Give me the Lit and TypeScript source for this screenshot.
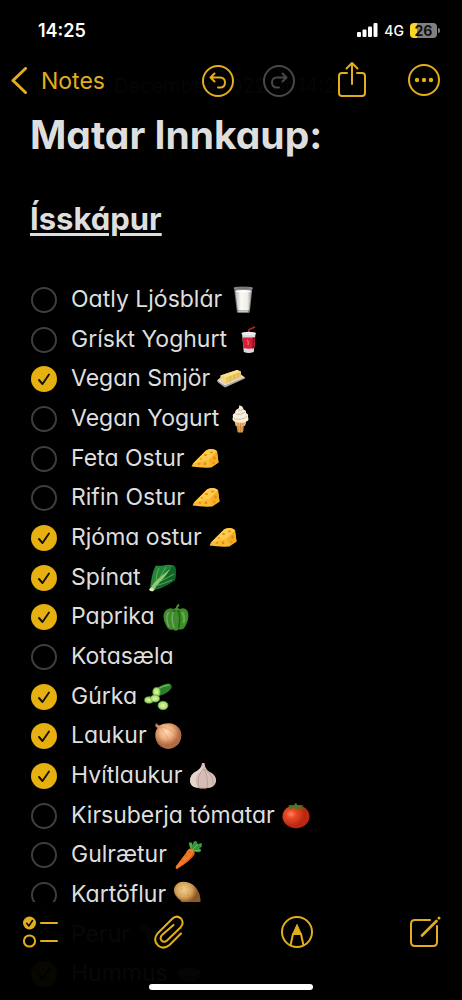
import { LitElement, html, css, svg, nothing, type TemplateResult } from "lit";
import { customElement, property, state } from "lit/decorators.js";

type Item = { text: string; food?: string; done: boolean };

const items: Item[] = [
  { text: "Oatly Ljósblár", food: "milk", done: false },
  { text: "Grískt Yoghurt", food: "cup", done: false },
  { text: "Vegan Smjör", food: "butter", done: true },
  { text: "Vegan Yogurt", food: "cone", done: false },
  { text: "Feta Ostur", food: "cheese", done: false },
  { text: "Rifin Ostur", food: "cheese", done: false },
  { text: "Rjóma ostur", food: "cheese", done: true },
  { text: "Spínat", food: "leaf", done: true },
  { text: "Paprika", food: "pepper", done: true },
  { text: "Kotasæla", done: false },
  { text: "Gúrka", food: "cucumber", done: true },
  { text: "Laukur", food: "onion", done: true },
  { text: "Hvítlaukur", food: "garlic", done: true },
  { text: "Kirsuberja tómatar", food: "tomato", done: false },
  { text: "Gulrætur", food: "carrot", done: false },
  { text: "Kartöflur", food: "potato", done: false },
  { text: "Perur", food: "pear", done: false },
  { text: "Hummus", food: "bowl", done: true },
];

/* Every food picture is drawn on a 28 x 28 grid. */
const foods: Record<string, TemplateResult> = {
  milk: svg`
    <defs><linearGradient id="g" x1="0" x2="1"><stop offset="0" stop-color="#b9b6b2"/><stop offset=".35" stop-color="#fbf9f4"/><stop offset=".75" stop-color="#f1eee8"/><stop offset="1" stop-color="#a5a19d"/></linearGradient></defs>
    <path d="M5 1.5h18.5l-2.6 24Q20.800 27 19 27H10Q8 27 7.800 25.500z" fill="#77787a"/>
    <path d="M6.300 5h16l-2.100 18.500Q20 24.500 18.500 24.500h-8Q9 24.500 8.700 23.500z" fill="url(#g)"/>
    <ellipse cx="14.300" cy="5.200" rx="8" ry="1.300" fill="#fffdf8"/>
    <ellipse cx="14.200" cy="2.200" rx="9.200" ry="1.200" fill="#6b6d70" stroke="#a6a8aa" stroke-width=".6"/>
    <path d="M9 25.500h10" stroke="#c5c5c5"/>`,
  cup: svg`
    <path d="M14.500 8L15 3.500L21 1" stroke="#c61f2c" stroke-width="1.400" fill="none"/>
    <path d="M8 7.500h13.500l-1.700 18.500Q14.700 28 9.800 26z" fill="#d8dadd"/>
    <path d="M8.500 11.500h12.600l-1 10.500Q14.600 23.500 9.500 22z" fill="#d51f33"/>
    <path d="M18.500 11.500h2.600l-1 10.500-2 .7z" fill="#a20f22"/>
    <ellipse cx="14.700" cy="7.500" rx="7.300" ry="1.700" fill="#eceef0"/>
    <path d="M13 14q2 1 1 5" stroke="#ef7080" fill="none" stroke-width="1.200"/>`,
  butter: svg`
    <path d="M0 15.500L4 12L24 9.500L28 12.500L8 22z" fill="#dedbd4"/>
    <path d="M0 15.500L8 20.500L28 12V13.500L8 22.500L1 17.500z" fill="#a8a49b"/>
    <path d="M3.500 10.500L20 5L24 6.500V12L9 18.800L4 16z" fill="#e9c65f"/>
    <path d="M3.500 10.500L20 5L24 6.500L9 12.500z" fill="#fbe08d"/>
    <path d="M3.500 10.500L9 12.500V18.800L4 16z" fill="#f3d67d"/>
    <path d="M13.500 10.800v5.500M17.500 9.200v5.500M21 7.800v5.500" stroke="#d4ab48" stroke-width=".6"/>`,
  cone: svg`
    <path d="M8.500 16h11.500l-1.200 5h-1l-1 6.500h-5L10.500 21h-.8z" fill="#dc9d4c"/>
    <path d="M9 17h11l-1 4H10z" fill="#efb869"/>
    <path d="M12 17v10M14.500 17v10M17 17v9" stroke="#b87530" stroke-width=".6"/>
    <path d="M13 .5q4 .2 4.500 4 3 .5 2.500 3.500 2.800 1 2 4 1.500 3-1.500 4.500-6 2.500-12 0Q5.500 15 7 12q-1-3 2-4 0-3.500 3.500-4.500 1-1 .5-3z" fill="#f6eede"/>
    <path d="M10 9q5 2 9-2M8 13.500q7 2.500 13-2M12 5q3 1 5-.5" stroke="#c9b995" stroke-width=".9" fill="none"/>`,
  cheese: svg`
    <path d="M.5 21.500L2 18.500L15 5.500Q17 4 20 4Q24.500 4 26 6.500L27.500 17.500L20 22.500Q10 23 .5 21.500z" fill="#f9bb33"/>
    <path d="M2 18.500L15 5.500Q17 4 20 4Q24.500 4 26 6.500L18 14.500Q10 16 2 18.500z" fill="#ffcb4b"/>
    <path d="M18 14.500L26 6.500L27.500 17.500L20 22.500z" fill="#f5ad28"/>
    <g fill="#dd8d18"><ellipse cx="8" cy="18.800" rx="1.500" ry=".9"/><ellipse cx="14" cy="18.800" rx="1.400" ry="1.500"/><ellipse cx="23.500" cy="13" rx="1.200" ry="1.700"/><ellipse cx="14.500" cy="10" rx="1.600" ry="1"/><ellipse cx="20.500" cy="7.500" rx="1.500" ry=".9"/><circle cx="22.500" cy="18" r="1"/><ellipse cx="10" cy="14" rx="1.100" ry=".8"/></g>`,
  leaf: svg`
    <path d="M2 24Q3 17 4 12Q6 4 8 1.500Q12 2 15 1.500Q21 0 27 2Q28.500 8 27 16Q22 19 20 20.500Q14 24 8 25.500L4 27.500z" fill="#23853a"/>
    <path d="M16 9Q22 3 27 2Q28.500 8 27 16Q22 19 20 20.500Q14 23 6 25z" fill="#12652a"/>
    <path d="M2 26Q4 20 10 15Q17 9 23 4Q18 12 12 18Q8 22 5 27.500z" fill="#8fca74"/>
    <path d="M8 18Q8 9 11 4M11 15Q15 8 18 3M11 18Q19 14 26 10M7 22Q15 20 24 16" stroke="#63b355" stroke-width=".9" fill="none"/>
    <ellipse cx="3.500" cy="25.500" rx="2.200" ry="1.800" fill="#e4eac4"/>`,
  pepper: svg`
    <path d="M3 8Q7 4 11 6Q15 4 18 6Q23 4 25.500 8Q28 14 24 22Q21 28 17 26Q14 29 11 26.500Q6 28 4 22Q-.5 14 3 8z" fill="#3f8c2b"/>
    <path d="M6.500 9Q3 15 7 24M11 9Q9 17 12 25" stroke="#76a766" stroke-width="1.500" fill="none"/>
    <path d="M16.500 8Q19 16 16.500 25" stroke="#22601c" stroke-width="1.500" fill="none"/>
    <path d="M20 9Q23.500 14 21.500 20" stroke="#5fb040" stroke-width="2.200" fill="none"/>
    <path d="M9 8Q14 5.500 19 8Q15 9.500 14 8Q13 9.500 9 8z" fill="#216a20"/>
    <path d="M14.500 8Q14 4 17 1.500" stroke="#4f8a35" stroke-width="1.800" fill="none"/>`,
  cucumber: svg`
    <path d="M10 8Q15 2 24 .5Q28.500 .8 27.500 5Q24 10.500 15 13z" fill="#2d7d2c"/>
    <path d="M13 6.500Q19 2.500 25.500 2" stroke="#6fb04f" stroke-width="1.300" fill="none"/>
    <g fill="#b4e274" stroke="#4f9e3a" stroke-width=".8"><ellipse cx="12.500" cy="9" rx="3.700" ry="4.500"/><ellipse cx="5" cy="17" rx="4.400" ry="3.200"/><ellipse cx="11" cy="15.500" rx="4.500" ry="3.500"/><ellipse cx="19" cy="22.500" rx="5" ry="4.200"/></g>
    <g fill="#d6ef9b"><ellipse cx="12.300" cy="9" rx="1.800" ry="2.300"/><ellipse cx="5" cy="17" rx="2" ry="1.300"/><ellipse cx="11" cy="15.500" rx="2.300" ry="1.600"/><ellipse cx="19" cy="22.500" rx="2.600" ry="1.900"/></g>`,
  onion: svg`
    <defs><radialGradient id="g" cx=".42" cy=".35"><stop offset="0" stop-color="#ffdcb4"/><stop offset=".55" stop-color="#ecab7c"/><stop offset="1" stop-color="#b06a44"/></radialGradient></defs>
    <path d="M2 1L5 3.500Q11 .5 18 1.500Q27 4.500 27.500 13Q27 22 20 25.500Q15 28 10 26Q4 24 2 18Q0 11 3.500 6L1 4z" fill="url(#g)"/>
    <path d="M5 5Q2 16 12 26M5 5Q14 12 17 26M5 5Q20 5 25 19" stroke="#c98258" stroke-width=".4" fill="none"/>`,
  garlic: svg`
    <path d="M13 1L15.500 1Q16 7 20 9.500Q28 13 27 20Q25 26 18 26Q14 28 10 26Q2 26 1 19Q1 12 8 9Q12.500 6 13 1z" fill="#d6beb8"/>
    <path d="M14 4Q14 9 9 12Q4 18 9 25.500Q2 26 1 19Q1 12 8 9z" fill="#e6d5cd"/>
    <path d="M14 7Q7 15 10 26M14.500 7Q20 15 18 26M15 7Q25 13 24 23" stroke="#b3948f" stroke-width=".7" fill="none"/>
    <path d="M10.500 26.500h7" stroke="#7b6253" stroke-width="1.200"/>`,
  tomato: svg`
    <defs><radialGradient id="g" cx=".32" cy=".4"><stop offset="0" stop-color="#ff8660"/><stop offset=".35" stop-color="#ea4a28"/><stop offset="1" stop-color="#ba2812"/></radialGradient></defs>
    <ellipse cx="14" cy="14.500" rx="13.500" ry="11.800" fill="url(#g)"/>
    <path d="M13 4.500Q9 2.500 6 3.500Q8 5 9 5.200Q7 6 6.500 7.500Q10 7 12.500 5.800L14 8.500L15.500 5.800Q18 7 22 7Q20 5.500 18 5L22 3Q17 3 15 4L14.500 1L12.500 1.500z" fill="#467b26"/>`,
  carrot: svg`
    <path d="M17 8Q13 2 16 1Q18 1 19 4Q19-.5 22 0Q24 1 23 4Q28 0 28 4Q28 7 25 7Q29 9 26 11Q23 12 20 10z" fill="#37933a"/>
    <path d="M18 9L24 3M17 7L17 2M20 10L26 9" stroke="#75bb50" fill="none"/>
    <path d="M12 12Q14 7 17.500 7.500Q21 9 20.500 13Q18 18 3 28Q1 28 2 25z" fill="#f27a25"/>
    <path d="M19 10Q20 15 4 27L3 28Q18 19 20.500 13z" fill="#d85d1c"/>
    <path d="M11 14l3 1.500M7 19l3 1.500M14 11l3 1" stroke="#c9540f" stroke-width=".7"/>`,
  potato: svg`
    <defs><radialGradient id="g" cx=".38" cy=".32"><stop offset="0" stop-color="#f2cf8c"/><stop offset=".6" stop-color="#d3a059"/><stop offset="1" stop-color="#8a5926"/></radialGradient></defs>
    <path d="M1.500 6Q5-.5 13 1Q20 2 24 8Q28 14 27.500 20Q25 27 18 26Q11 25 7 19Q-1 13 1.500 6z" fill="url(#g)"/>
    <g fill="#b8853f"><ellipse cx="9" cy="8" rx=".8" ry=".4"/><ellipse cx="15" cy="14" rx=".8" ry=".4"/></g>`,
  pear: svg`<path d="M4 4Q10 2 14 9Q25 12 24 20Q20 27 13 23Q8 19 8 12Q3 8 4 4z" fill="#8aa33c"/>`,
  bowl: svg`<path d="M2 12h24Q26 20 18 22h-8Q2 20 2 12z" fill="#9a6e3c"/><ellipse cx="14" cy="12" rx="12" ry="4" fill="#c49a62"/>`,
};

@customElement("food-icon")
class FoodIcon extends LitElement {
  static styles = css`
    :host { display: block; flex: none; width: 28px; height: 28px; }
    .art { display: block; }
  `;
  @property() name = "";

  render() {
    return html`<svg class="art" width="28" height="28" viewBox="0 0 28 28" aria-hidden="true">${foods[this.name]}</svg>`;
  }
}

@customElement("status-bar")
class StatusBar extends LitElement {
  static styles = css`
    :host {
      display: flex;
      align-items: center;
      justify-content: space-between;
      height: 60px;
      padding: 0 22px 0 38px;
      color: #fff;
    }
    .time { font-size: 18px; font-weight: 600; }
    .state { display: flex; align-items: center; gap: 6px; }
    .network { font-size: 14px; font-weight: 500; }
    .battery { display: flex; align-items: center; gap: 1px; }
    .cell {
      width: 27px;
      border-radius: 4px;
      background: linear-gradient(90deg, #fbd723 26%, #818181 26%);
      color: #111;
      font-size: 14px;
      font-weight: 700;
      line-height: 15px;
      text-align: center;
    }
    .tip { width: 2px; height: 5px; border-radius: 0 2px 2px 0; background: #818181; }
  `;

  render() {
    return html`
      <span class="time">14:25</span>
      <span class="state">
        <svg width="21" height="14" viewBox="0 0 21 14" fill="#fff" aria-hidden="true">
          <rect x="0" y="9" width="4" height="5" rx="1"/><rect x="5.500" y="6.500" width="4" height="7.500" rx="1"/>
          <rect x="11" y="3.500" width="4" height="10.500" rx="1"/><rect x="16.500" y="0" width="4" height="14" rx="1"/>
        </svg>
        <span class="network">4G</span>
        <span class="battery"><span class="cell">26</span><span class="tip"></span></span>
      </span>
    `;
  }
}

@customElement("check-row")
class CheckRow extends LitElement {
  static styles = css`
    :host { display: block; }
    .row { display: flex; align-items: center; gap: 14px; }
    .box {
      appearance: none;
      flex: none;
      box-sizing: border-box;
      width: 26px;
      height: 26px;
      margin: 0;
      border: 2px solid #3e3e40;
      border-radius: 50%;
    }
    .box:checked {
      border: 0;
      background: #e6b010 url("data:image/svg+xml,%3Csvg xmlns='http://www.w3.org/2000/svg' viewBox='0 0 26 26'%3E%3Cpath d='M8 14L11.500 18L18 8.500' fill='none' stroke='%23151000' stroke-width='1.900' stroke-linecap='round' stroke-linejoin='round'/%3E%3C/svg%3E");
    }
    .label { display: flex; align-items: center; gap: 7px; }
  `;
  @property() text = "";
  @property() food?: string;
  @property({ type: Boolean }) done = false;

  render() {
    return html`
      <div class="row">
        <input class="box" id="box" type="checkbox" .checked=${this.done} />
        <label class="label" for="box">${this.text}${this.food ? html`<food-icon name=${this.food}></food-icon>` : nothing}</label>
      </div>
    `;
  }
}

@customElement("app-root")
class AppRoot extends LitElement {
  static styles = css`
    :host {
      display: block;
      position: relative;
      height: 100vh;
      overflow: hidden;
      background: #000;
      color: #dedede;
      font-family: Inter, "Liberation Sans", sans-serif;
    }
    .top { position: absolute; inset: 0 0 auto; background: rgba(0, 0, 0, 0.98); }
    .nav { display: flex; align-items: center; padding: 0 21px 0 10px; height: 42px; }
    .bottom {
      position: absolute;
      inset: auto 0 0;
      display: flex;
      flex-direction: column;
      align-items: center;
      background: rgba(0, 0, 0, 0.97);
    }
    .tools {
      display: flex;
      align-items: center;
      justify-content: space-between;
      align-self: stretch;
      height: 60px;
      padding: 0 20px;
    }
    .home { width: 164px; height: 6px; margin: 22px 0 10px; border-radius: 3px; background: #fff; }
    .action {
      display: block;
      padding: 0;
      border: 0;
      background: none;
      color: #e3ae1c;
      font: inherit;
    }
    .action:disabled { color: #48484a; }
    .action svg { display: block; }
    .back {
      display: flex;
      align-items: center;
      gap: 13px;
      margin-right: auto;
      color: #e3ae1c;
      font-size: 23px;
      text-decoration: none;
    }
    .group { display: flex; align-items: center; gap: 29px; margin-right: 42px; }
    .share { margin-right: 40px; }
    .note { padding: 75px 30px 0; font-feature-settings: "cv11"; }
    .date { margin: 0; font-size: 20px; line-height: 22px; text-align: center; }
    .title { margin: 12px 0 0; font-size: 39px; font-weight: 700; line-height: 52px; }
    .section {
      margin: 38px 0 0;
      font-size: 31px;
      font-weight: 700;
      line-height: 40px;
      text-decoration: underline;
      text-decoration-thickness: 3px;
      text-underline-offset: 3px;
    }
    .list { margin: 41px 0 0; padding: 0 0 0 1px; list-style: none; font-size: 23px; line-height: 1.725; }
  `;

  @state() private items = items;

  render() {
    return html`
      <main class="note">
        <p class="date">December 2022 at 14:25</p>
        <h1 class="title">Matar Innkaup:</h1>
        <h2 class="section">Ísskápur</h2>
        <ul class="list">
          ${this.items.map(
            (item) => html`<li><check-row .text=${item.text} .food=${item.food} .done=${item.done}></check-row></li>`,
          )}
        </ul>
      </main>

      <header class="top">
        <status-bar></status-bar>
        <nav class="nav">
          <a class="back" href="#notes">
            <svg width="18" height="28" viewBox="0 0 18 28" fill="none" stroke="currentColor" stroke-width="3" stroke-linecap="round" stroke-linejoin="round" aria-hidden="true"><path d="M15.500 1.500L3 13.500L15.500 25.500"/></svg>
            Notes
          </a>
          <div class="group">
            <button class="action" aria-label="Undo">
              <svg width="32" height="32" viewBox="0 0 32 32" fill="none" stroke="currentColor" stroke-width="2" stroke-linecap="round" stroke-linejoin="round"><circle cx="16" cy="16" r="15"/><path d="M12.500 8.500L8.500 12.500L12.500 16.500M9 12.500H18Q23 12.800 23 17.500Q23 22.500 18 22.500H16"/></svg>
            </button>
            <button class="action" aria-label="Redo" disabled>
              <svg width="32" height="32" viewBox="0 0 32 32" fill="none" stroke="currentColor" stroke-width="2" stroke-linecap="round" stroke-linejoin="round"><circle cx="16" cy="16" r="15"/><path d="M19.500 8.500L23.500 12.500L19.500 16.500M23 12.500H14Q9 12.800 9 17.500Q9 22.500 14 22.500H16"/></svg>
            </button>
          </div>
          <button class="action share" aria-label="Share">
            <svg width="30" height="40" viewBox="0 0 30 40" fill="none" stroke="currentColor" stroke-width="2" stroke-linecap="round" stroke-linejoin="round"><path d="M10 12H5Q2 12 2 15V32Q2 35 5 35H25Q28 35 28 32V15Q28 12 25 12H20M15 23V2M9.500 7.500L15 2L20.500 7.500"/></svg>
          </button>
          <button class="action" aria-label="More">
            <svg width="34" height="36" viewBox="0 0 34 36" fill="none" stroke="currentColor" stroke-width="2"><circle cx="17" cy="17" r="15"/><g fill="currentColor" stroke="none"><circle cx="10" cy="17" r="2.200"/><circle cx="17" cy="17" r="2.200"/><circle cx="24" cy="17" r="2.200"/></g></svg>
          </button>
        </nav>
      </header>

      <footer class="bottom">
        <div class="tools">
          <button class="action" aria-label="Checklist">
            <svg width="38" height="34" viewBox="0 0 38 34" fill="none" stroke="currentColor" stroke-width="2" stroke-linecap="round" stroke-linejoin="round"><circle cx="9.500" cy="8" r="6.500" fill="currentColor" stroke="none"/><path d="M6.700 8.300L8.800 11L12.500 5.500" stroke="#000" stroke-width="1.500"/><circle cx="9.500" cy="26" r="5.600"/><path d="M21 8H37M21 26H37"/></svg>
          </button>
          <button class="action" aria-label="Attach">
            <svg width="32" height="34" viewBox="0 0 32 34" fill="none" stroke="currentColor" stroke-width="2" stroke-linecap="round" stroke-linejoin="round"><path d="M28 18.500L16.500 30Q10.500 35 5 30.500Q-.5 25 4.500 18.500L19 4Q23.500-.5 28 3.500Q31.500 8 27.500 12.500L14 25.500Q11 28 8.500 25.500Q6.500 23 9 20L20.500 10"/></svg>
          </button>
          <button class="action" aria-label="Markup">
            <svg width="32" height="32" viewBox="0 0 32 32" fill="none" stroke="currentColor" stroke-width="2" stroke-linejoin="round"><circle cx="16" cy="16" r="15"/><path d="M9.500 29.500L12 18H20L22.500 29.500"/><path d="M16 8.500L20.500 18.500H11.500z" fill="currentColor" stroke-width="1"/></svg>
          </button>
          <button class="action" aria-label="New note">
            <svg width="34" height="34" viewBox="0 0 34 34" fill="none" stroke="currentColor" stroke-width="2" stroke-linecap="round" stroke-linejoin="round"><path d="M22 5H7Q3 5 3 9V27Q3 31 7 31H25Q29 31 29 27V11"/><path d="M14 20.500L28.500 6" stroke-width="2.600"/><circle cx="31" cy="3" r="1.500" fill="currentColor" stroke="none"/></svg>
          </button>
        </div>
        <div class="home"></div>
      </footer>
    `;
  }
}
